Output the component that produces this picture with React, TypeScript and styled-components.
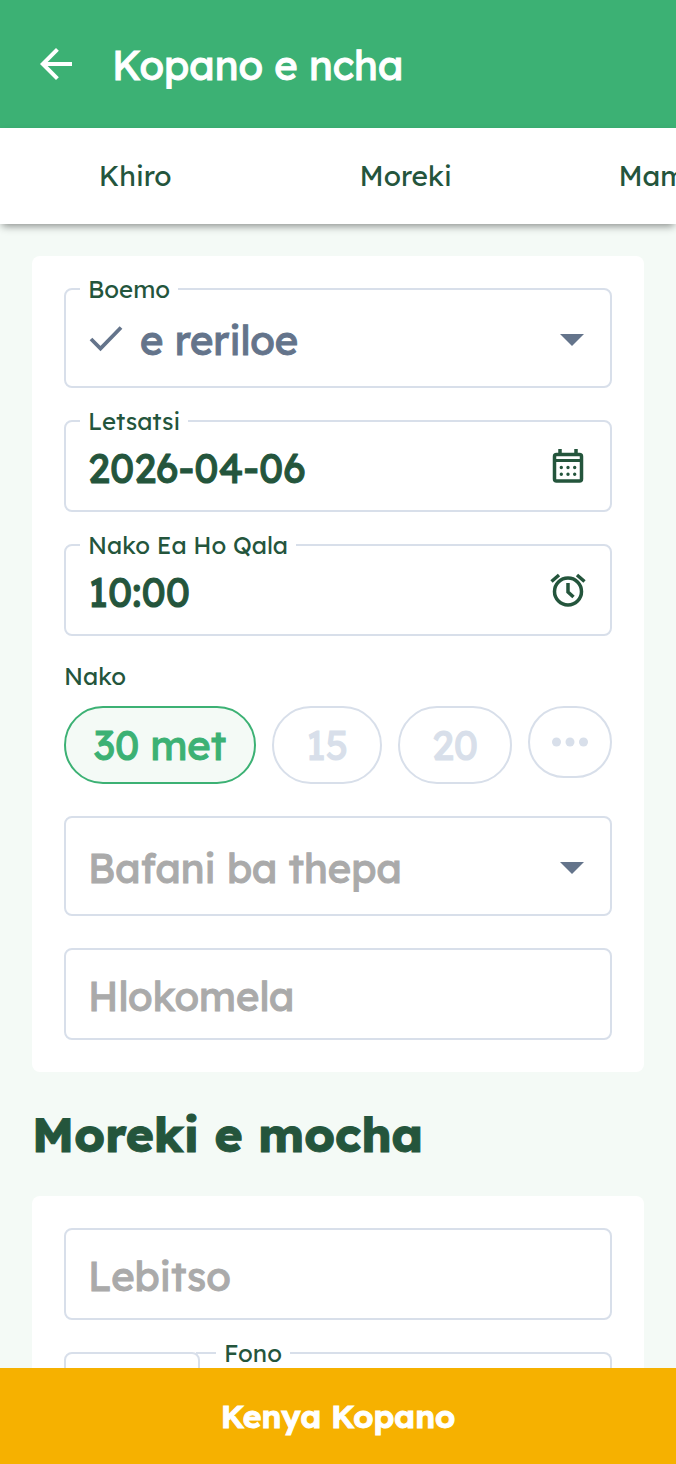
import React from "react";
import styled, { createGlobalStyle, css } from "styled-components";
import { MdArrowBack } from "react-icons/md";

const color = {
  green: "#3cb174",
  dark: "#24553c",
  page: "#f4faf6",
  line: "#d8dfea",
  slate: "#64748b",
  muted: "#aaaaaa",
  amber: "#f6b100",
};

/* Large text gets a thin outline in its own colour for a sturdier look. */
const sturdy = css`
  -webkit-text-stroke: 1px currentColor;
`;

const GlobalStyle = createGlobalStyle`
  *, *::before, *::after { box-sizing: border-box; }
  body { margin: 0; background: ${color.page}; }
  body, button, input, select {
    font-family: Lexend, Inter, "Liberation Sans", sans-serif;
  }
`;

const Screen = styled.div`
  display: flex;
  flex-direction: column;
  height: 100vh;
  color: ${color.dark};
`;

const AppBar = styled.header`
  display: flex;
  align-items: center;
  gap: 32px;
  height: 128px;
  padding: 0 32px;
  background: ${color.green};
  color: #fff;
  flex: none;
`;

const BackButton = styled.button`
  display: flex;
  padding: 0;
  border: 0;
  background: none;
  color: inherit;
  font-size: 48px;
`;

const Title = styled.h1`
  margin: 0;
  padding-top: 2px;
  font-size: 40px;
  line-height: 48px;
  font-weight: 400;
  ${sturdy}
`;

const Tabs = styled.nav`
  position: relative;
  z-index: 1;
  display: flex;
  flex: none;
  height: 96px;
  background: #fff;
  box-shadow: 0 4px 8px -2px rgba(0, 0, 0, 0.45);
`;

const TabStrip = styled.div`
  display: flex;
  width: 100%;
  overflow: hidden;
`;

const Tab = styled.button`
  flex: 0 0 40%;
  padding: 0;
  border: 0;
  background: none;
  color: inherit;
  font-size: 28px;
  line-height: 32px;
  font-weight: 400;
`;

const Content = styled.main`
  flex: 1;
  min-height: 0;
  overflow-y: auto;
  scrollbar-width: none;
  padding: 32px;
`;

const Card = styled.section`
  display: flex;
  flex-direction: column;
  gap: 32px;
  padding: 32px;
  border-radius: 8px;
  background: #fff;
`;

const SectionTitle = styled.h2`
  margin: 0;
  padding: 32px 0;
  font-size: 48px;
  line-height: 60px;
  font-weight: 700;
  ${sturdy}
`;

const Frame = styled.fieldset<{ $joined?: boolean }>`
  flex: 1;
  min-width: 0;
  margin: 0 0 0 ${(p) => (p.$joined ? "-4px" : "0")};
  padding: 0 0 0 ${(p) => (p.$joined ? "6px" : "0")};
  border: 2px solid ${color.line};
  border-left-width: ${(p) => (p.$joined ? "0" : "2px")};
  border-radius: ${(p) => (p.$joined ? "0 8px 8px 0" : "8px")};
`;

const FrameLabel = styled.legend`
  margin-left: 14px;
  padding: 0 8px;
  font-size: 24px;
  line-height: 2px;
  font-weight: 400;
`;

const FrameRow = styled.div<{ $tall?: boolean }>`
  display: flex;
  align-items: center;
  gap: 16px;
  height: ${(p) => (p.$tall ? "96px" : "88px")};
  padding: 0 22px;
`;

const TextInput = styled.input`
  flex: 1;
  min-width: 0;
  height: 100%;
  padding: 4px 0 0;
  border: 0;
  outline: 0;
  background: none;
  color: ${color.dark};
  font-size: 40px;
  font-weight: 400;
  ${sturdy}
  &::placeholder { color: ${color.muted}; opacity: 1; }
`;

const Select = styled.select<{ $empty?: boolean }>`
  flex: 1;
  min-width: 0;
  height: 100%;
  padding: 4px 0 0;
  border: 0;
  outline: 0;
  appearance: none;
  background: none;
  color: ${(p) => (p.$empty ? color.muted : color.slate)};
  font-size: 40px;
  font-weight: 400;
  ${sturdy}
`;

const IconButton = styled.button`
  display: flex;
  flex: none;
  padding: 0;
  border: 0;
  background: none;
  color: inherit;
`;

const Icon = styled.svg`
  display: block;
  flex: none;
  pointer-events: none;
`;

const GroupLabel = styled.div`
  margin-bottom: 22px;
  font-size: 24px;
  line-height: 16px;
  font-weight: 400;
`;

const Chips = styled.div`
  display: flex;
  align-items: flex-start;
  gap: 16px;
`;

const Chip = styled.button<{ $basis: number; $selected?: boolean; $short?: boolean }>`
  display: flex;
  align-items: center;
  justify-content: center;
  flex: 1 1 ${(p) => p.$basis}px;
  min-width: 0;
  height: ${(p) => (p.$short ? "72px" : "78px")};
  padding: 0;
  border: 2px solid ${(p) => (p.$selected ? color.green : color.line)};
  border-radius: 40px;
  background: ${(p) => (p.$selected ? color.page : "#fff")};
  color: ${(p) => (p.$selected ? color.green : color.line)};
  font-size: 40px;
  line-height: 48px;
  font-weight: 400;
  white-space: nowrap;
  ${sturdy}
`;

const PhoneRow = styled.div`
  display: flex;
`;

const PrefixBox = styled.div`
  display: flex;
  flex: none;
  width: 136px;
  border: 2px solid ${color.line};
  border-radius: 8px;
`;

const Submit = styled.button`
  flex: none;
  height: 96px;
  padding: 0;
  border: 0;
  background: ${color.amber};
  color: #fff;
  font-size: 32px;
  line-height: 40px;
  font-weight: 600;
  ${sturdy}
`;

const Caret = () => (
  <Icon width="32" height="32" viewBox="0 0 32 32" aria-hidden="true">
    <path d="M4 12h24L16 24z" fill={color.slate} />
  </Icon>
);

const Check = () => (
  <Icon width="36" height="36" viewBox="0 0 36 36" aria-hidden="true">
    <path d="M3 19l9.5 9.5L33 7.5" fill="none" stroke={color.slate} strokeWidth="3.8" />
  </Icon>
);

const Calendar = () => (
  <Icon width="40" height="40" viewBox="0 0 40 40" fill="none" stroke="currentColor" aria-hidden="true">
    <rect x="6.5" y="8.5" width="27" height="26.5" rx="2" strokeWidth="3.5" />
    <path d="M12 3v6M28 3v6" strokeWidth="3.5" />
    <path d="M6 14.5h28" strokeWidth="3" />
    <path
      d="M13.3 21.5h0M20 21.5h0M26.7 21.5h0M13.3 28.3h0M20 28.3h0M26.7 28.3h0"
      strokeWidth="3.4"
      strokeLinecap="round"
    />
  </Icon>
);

const Alarm = () => (
  <Icon width="40" height="40" viewBox="0 0 40 40" fill="none" stroke="currentColor" aria-hidden="true">
    <circle cx="20" cy="21.5" r="13.5" strokeWidth="3.5" />
    <path d="M20 13v9l5.5 5" strokeWidth="3.5" />
    <path d="M3.5 11.5L11 5M36.5 11.5L29 5" strokeWidth="3.5" />
  </Icon>
);

const Dots = () => (
  <Icon width="40" height="40" viewBox="0 0 40 40" fill="currentColor" aria-hidden="true">
    <circle cx="6.5" cy="20" r="4.5" />
    <circle cx="20" cy="20" r="4.5" />
    <circle cx="33.5" cy="20" r="4.5" />
  </Icon>
);

export default function App() {
  return (
    <Screen>
      <GlobalStyle />
      <AppBar>
        <BackButton type="button" aria-label="Khutla">
          <MdArrowBack />
        </BackButton>
        <Title>Kopano e ncha</Title>
      </AppBar>
      <Tabs>
        <TabStrip>
          <Tab type="button">Khiro</Tab>
          <Tab type="button">Moreki</Tab>
          <Tab type="button">Mamello</Tab>
        </TabStrip>
      </Tabs>
      <Content>
        <Card>
          <Frame>
            <FrameLabel>
              <label htmlFor="status">Boemo</label>
            </FrameLabel>
            <FrameRow $tall>
              <Check />
              <Select id="status" defaultValue="planned">
                <option value="planned">e reriloe</option>
              </Select>
              <Caret />
            </FrameRow>
          </Frame>
          <Frame>
            <FrameLabel>
              <label htmlFor="date">Letsatsi</label>
            </FrameLabel>
            <FrameRow>
              <TextInput id="date" defaultValue="2026-04-06" />
              <IconButton type="button" aria-label="Letsatsi">
                <Calendar />
              </IconButton>
            </FrameRow>
          </Frame>
          <Frame>
            <FrameLabel>
              <label htmlFor="start">Nako Ea Ho Qala</label>
            </FrameLabel>
            <FrameRow>
              <TextInput id="start" defaultValue="10:00" />
              <IconButton type="button" aria-label="Nako">
                <Alarm />
              </IconButton>
            </FrameRow>
          </Frame>
          <div role="group" aria-labelledby="duration">
            <GroupLabel id="duration">Nako</GroupLabel>
            <Chips>
              <Chip type="button" $basis={192} $selected aria-pressed="true">30 met</Chip>
              <Chip type="button" $basis={110}>15</Chip>
              <Chip type="button" $basis={114}>20</Chip>
              <Chip type="button" $basis={84} $short aria-label="Tse ling">
                <Dots />
              </Chip>
            </Chips>
          </div>
          <Frame>
            <FrameRow $tall>
              <Select $empty aria-label="Bafani ba thepa" defaultValue="">
                <option value="">Bafani ba thepa</option>
              </Select>
              <Caret />
            </FrameRow>
          </Frame>
          <Frame>
            <FrameRow>
              <TextInput aria-label="Hlokomela" placeholder="Hlokomela" />
            </FrameRow>
          </Frame>
        </Card>
        <SectionTitle>Moreki e mocha</SectionTitle>
        <Card>
          <Frame>
            <FrameRow>
              <TextInput aria-label="Lebitso" placeholder="Lebitso" />
            </FrameRow>
          </Frame>
          <PhoneRow>
            <PrefixBox />
            <Frame $joined>
              <FrameLabel>
                <label htmlFor="phone">Fono</label>
              </FrameLabel>
              <FrameRow>
                <TextInput id="phone" type="tel" />
              </FrameRow>
            </Frame>
          </PhoneRow>
        </Card>
      </Content>
      <Submit type="button">Kenya Kopano</Submit>
    </Screen>
  );
}
